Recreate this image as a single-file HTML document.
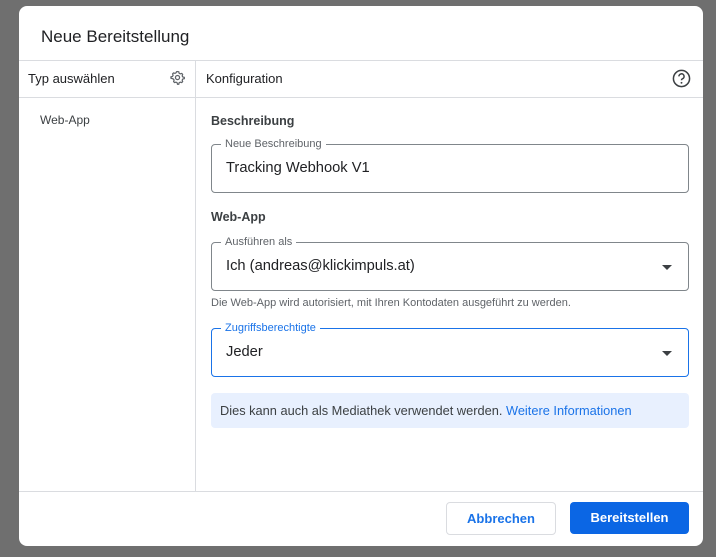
<!DOCTYPE html>
<html><head><meta charset="utf-8"><style>
*{box-sizing:border-box;margin:0;padding:0}
body{width:716px;height:557px;background:#6f6f6f;font-family:"Liberation Sans",sans-serif;position:relative;overflow:hidden;color:#202124}
.d{position:absolute;left:19px;top:6px;width:684px;height:540px;background:#fff;border-radius:8px;overflow:hidden}
.a{position:absolute}
.hl{position:absolute;height:1px;background:#dadce0}
.f{position:absolute;left:211px;width:478px;height:49px;border:1px solid #80868b;border-radius:4px}
.f .lb{position:absolute;top:-8px;left:9px;background:#fff;padding:0 4px;font-size:11px;color:#5f6368;line-height:14px}
.f .v{position:absolute;left:14px;top:15px;font-size:14.7px;color:#202124}
.f .ar{position:absolute;right:16px;top:22px;width:0;height:0;border-left:5px solid transparent;border-right:5px solid transparent;border-top:5px solid #3c4043}
</style></head><body>
<div class="d">
<div class="a" style="left:22px;top:21px;font-size:17px;color:#202124">Neue Bereitstellung</div>
<div class="hl" style="left:0;top:54px;width:684px"></div>
<div class="hl" style="left:0;top:91px;width:684px"></div>
<div class="hl" style="left:0;top:485px;width:684px"></div>
<div class="a" style="left:176px;top:54px;width:1px;height:431px;background:#dadce0"></div>
<div class="a" style="left:9px;top:65px;font-size:13px">Typ auswählen</div>
<svg class="a" style="left:151px;top:64px" width="15" height="15" viewBox="0 0 24 24"><path fill="none" stroke="#5f6368" stroke-width="2" d="M12 2.5l2 .3.6 2.4 1.8 1 2.4-.7 1.4 1.5-.7 2.4 1 1.8 2.4.6v2l-2.4.6-1 1.8.7 2.4-1.4 1.5-2.4-.7-1.8 1-.6 2.4h-2l-.6-2.4-1.8-1-2.4.7-1.400-1.5.7-2.4-1-1.8L1.5 13v-2l2.4-.6 1-1.8-.7-2.4 1.4-1.5 2.4.7 1.8-1L10.4 2.8z"/><circle cx="12" cy="12" r="3.3" fill="none" stroke="#5f6368" stroke-width="2"/></svg>
<div class="a" style="left:187px;top:65px;font-size:13px">Konfiguration</div>
<svg class="a" style="left:653px;top:63px" width="19" height="19" viewBox="0 0 20 20"><circle cx="10" cy="10" r="8.5" fill="none" stroke="#3c4043" stroke-width="1.6"/><path d="M7.3 7.8a2.7 2.7 0 1 1 3.6 2.5c-.7.3-.9.8-.9 1.6" fill="none" stroke="#3c4043" stroke-width="1.6"/><circle cx="10" cy="14.5" r="1" fill="#3c4043"/></svg>
<div class="a" style="left:21px;top:107px;font-size:12px;color:#3c4043">Web-App</div>
<div class="a" style="left:192px;top:108px;font-size:12.5px;font-weight:bold;color:#3c4043">Beschreibung</div>
<div class="a" style="left:192px;top:204px;font-size:12.5px;font-weight:bold;color:#3c4043">Web-App</div>
<div class="a" style="left:192px;top:291px;font-size:11px;color:#5f6368;white-space:nowrap">Die Web-App wird autorisiert, mit Ihren Kontodaten ausgeführt zu werden.</div>
</div>
<div class="f" style="top:144px"><span class="lb">Neue Beschreibung</span><span class="v">Tracking Webhook V1</span></div>
<div class="f" style="top:242px"><span class="lb">Ausführen als</span><span class="v">Ich (andreas@klickimpuls.at)</span><span class="ar"></span></div>
<div class="f" style="top:328px;border-color:#1a73e8"><span class="lb" style="color:#1a73e8">Zugriffsberechtigte</span><span class="v">Jeder</span><span class="ar"></span></div>
<div class="a" style="left:211px;top:393px;width:478px;height:35px;background:#e8f0fe;border-radius:4px;font-size:12.8px;color:#3c4043;padding:10px 9px;white-space:nowrap">Dies kann auch als Mediathek verwendet werden. <span style="color:#1a73e8">Weitere Informationen</span></div>
<div class="a" style="left:446px;top:502px;width:110px;height:33px;border:1px solid #dadce0;border-radius:4px;color:#1a73e8;font-size:13px;font-weight:bold;text-align:center;line-height:31px">Abbrechen</div>
<div class="a" style="left:570px;top:502px;width:119px;height:32px;background:#0b66e4;border-radius:4px;color:#fff;font-size:13px;font-weight:bold;text-align:center;line-height:32px">Bereitstellen</div>
</body></html>
